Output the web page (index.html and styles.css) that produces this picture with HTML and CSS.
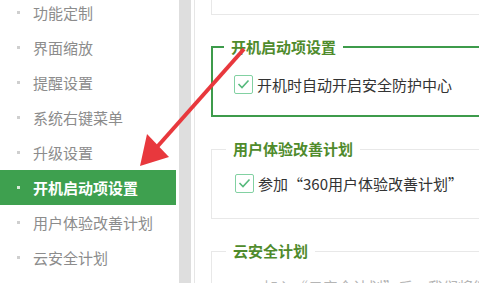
FILE: index.html
```html
<!DOCTYPE html>
<html lang="zh-CN">

<head>
  <meta charset="UTF-8" />
  <meta name="viewport" content="width=device-width, initial-scale=1.0" />
  <title>设置中心</title>
  <link rel="stylesheet" href="styles.css">
</head>

<body>
  <div class="page">
    <!-- 左侧菜单 -->
    <ul class="menu">
      <li><i></i>功能定制</li>
      <li><i></i>界面缩放</li>
      <li><i></i>提醒设置</li>
      <li><i></i>系统右键菜单</li>
      <li><i></i>升级设置</li>
      <li class="active"><i></i>开机启动项设置</li>
      <li><i></i>用户体验改善计划</li>
      <li><i></i>云安全计划</li>
    </ul>
    <div class="scrollbar"></div>

    <!-- 右侧设置内容 -->
    <div class="content">
      <div class="panel-top"></div>

      <fieldset class="group group-on">
        <legend>开机启动项设置</legend>
        <label class="check">
          <span class="box">
            <svg width="13" height="10" viewBox="0 0 13 10"><path d="M1.5 5 L5 8.5 L11.5 1.5" fill="none" stroke="#56b97c" stroke-width="1.6"/></svg>
          </span>
          开机时自动开启安全防护中心
        </label>
      </fieldset>

      <fieldset class="group">
        <legend>用户体验改善计划</legend>
        <label class="check">
          <span class="box">
            <svg width="13" height="10" viewBox="0 0 13 10"><path d="M1.5 5 L5 8.5 L11.5 1.5" fill="none" stroke="#56b97c" stroke-width="1.6"/></svg>
          </span>
          参加“360用户体验改善计划”
        </label>
      </fieldset>

      <fieldset class="group group-last">
        <legend>云安全计划</legend>
        <p class="desc">加入“云安全计划”后，我们将能够</p>
      </fieldset>
    </div>

    <!-- 红色指示箭头 -->
    <svg class="arrow" width="479" height="283" viewBox="0 0 479 283">
      <line x1="244" y1="49" x2="157" y2="147" stroke="#e8383d" stroke-width="4" />
      <polygon points="140,166 147,134 169,157" fill="#e8383d" />
    </svg>
  </div>
</body>

</html>
```

FILE: styles.css
```css
body {
  margin: 0;
  padding: 0;
  background: #fff;
  font-family: "Microsoft YaHei", "Noto Sans CJK SC", sans-serif;
  overflow: hidden;
}

.page {
  position: relative;
  display: flex;
  width: 479px;
  height: 283px;
  overflow: hidden;
}

/* 左侧菜单 */
.menu {
  width: 179px;
  flex-shrink: 0;
  margin: -5px 0 0;
  padding: 0;
  list-style: none;
}

.menu li {
  display: flex;
  align-items: center;
  width: 176px;
  height: 35px;
  font-size: 15px;
  color: #8c8c8c;
}

.menu li i {
  width: 3px;
  height: 3px;
  margin: 0 13px 0 17px;
  background-color: #cfcfcf;
}

.menu li.active {
  background-color: #3ea04f;
  color: #fff;
  font-weight: bold;
}

.menu li.active i {
  background-color: #d6e9d6;
}

.scrollbar {
  width: 12px;
  flex-shrink: 0;
  background-color: #dedede;
}

/* 右侧内容 */
.content {
  flex-shrink: 0;
  width: 330px;
  margin-left: 3px;
  padding-left: 16px;
  border-left: 1px solid #e6e6e6;
}

.panel-top {
  height: 14px;
  border: 1px solid #e8e8e8;
  border-top: 0;
}

.group {
  margin: 22px 0 0;
  padding: 14px 0 25px 14px;
  border: 1px solid #e8e8e8;
}

.group legend {
  margin-left: 0;
  padding: 0 7px;
  font-size: 15px;
  line-height: 20px;
  font-weight: bold;
  color: #4f8b2c;
}

.group-on {
  padding: 17px 0 21px 12px;
  border: 2px solid #3d9b4b;
}

.group-on legend {
  margin-left: -1px;
}

.group + .group {
  margin-top: 22px;
}

.check {
  display: flex;
  align-items: center;
  height: 20px;
  font-size: 15px;
  color: #333;
}

.check .box {
  display: flex;
  align-items: center;
  justify-content: center;
  box-sizing: border-box;
  width: 19px;
  height: 19px;
  margin: 0 4px 0 9px;
  border: 1px solid #82d1a2;
  border-radius: 2px;
}

.desc {
  margin: 0 0 0 37px;
  font-size: 15px;
  line-height: 20px;
  color: #b5b5b5;
  white-space: nowrap;
}

.group-last {
  padding-top: 16px;
}

.arrow {
  position: absolute;
  left: 0;
  top: 0;
  pointer-events: none;
}
```
